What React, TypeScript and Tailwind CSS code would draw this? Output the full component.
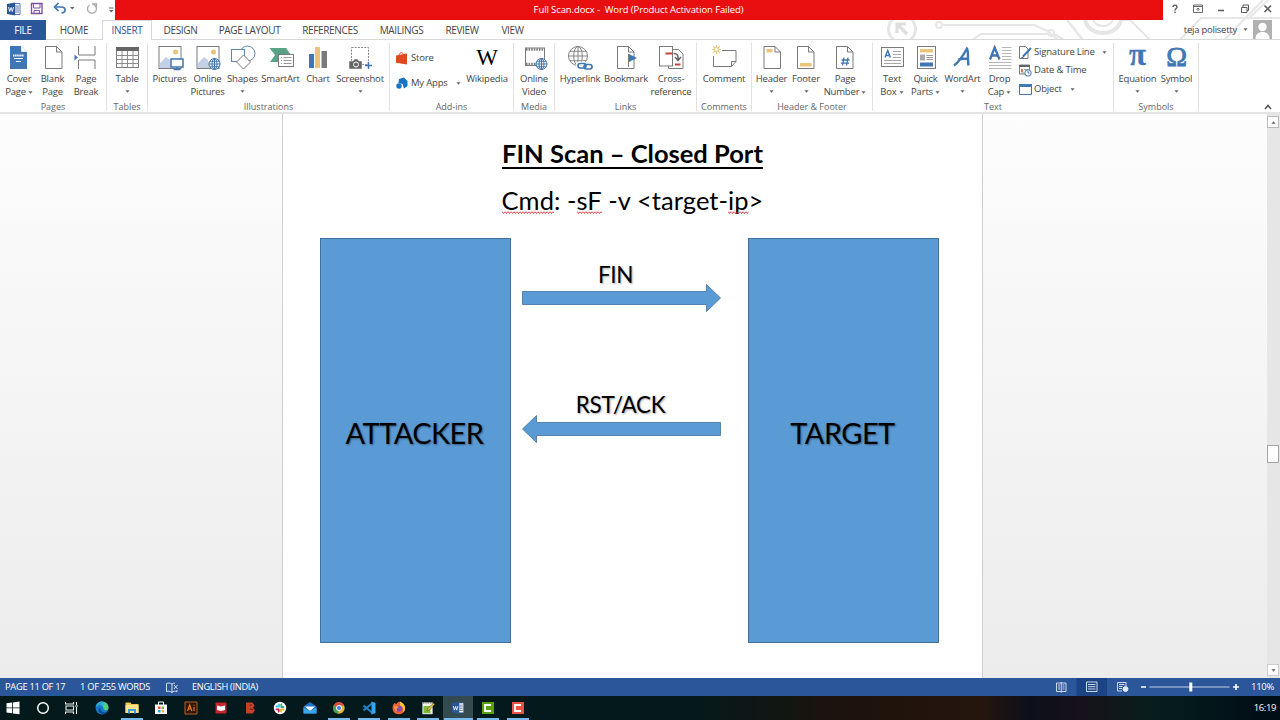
import type { ReactNode } from "react";
import clsx from "clsx";

const GRAY = "#7a7a7a";
const BLUE = "#3f76b5";
const SAND = "#eac47c";

const Caret = ({ className }: { className?: string }) => (
  <svg viewBox="0 0 6 3" className={clsx("h-[3px] w-[5px] shrink-0", className)}>
    <path d="M0.5 0h5L3 3z" fill="#666" />
  </svg>
);

const Globe = ({ cx, cy, r, color = BLUE }: { cx: number; cy: number; r: number; color?: string }) => (
  <g stroke={color} fill="#fff" strokeWidth="1">
    <circle cx={cx} cy={cy} r={r} />
    <ellipse cx={cx} cy={cy} rx={r * 0.45} ry={r} fill="none" />
    <path d={`M${cx - r} ${cy}h${r * 2}M${cx} ${cy - r}v${r * 2}M${cx - r * 0.85} ${cy - r / 2}h${r * 1.7}M${cx - r * 0.85} ${cy + r / 2}h${r * 1.7}`} fill="none" />
  </g>
);

const Doc = ({ x, children }: { x: number; children?: ReactNode }) => (
  <g>
    <path d={`M${x} 1.5h11l5.5 5.5v16.5h-16.5z`} fill="#fff" stroke={GRAY} />
    <path d={`M${x + 11} 1.5v5.5h5.5`} fill="none" stroke={GRAY} />
    {children}
  </g>
);

const Landscape = ({ x }: { x: number }) => (
  <g>
    <rect x={x} y="1.5" width="22" height="22" fill="#fff" stroke={GRAY} />
    <path d={`M${x + 1} 23v-5l6-6 4 3 2 8z`} fill="#c3d0e8" />
    <circle cx={x + 16.5} cy="7" r="2.5" fill={SAND} />
  </g>
);

const icons: Record<string, ReactNode> = {
  cover: (
    <>
      <path d="M5 1h11.500l5.500 5.500V24H5z" fill={BLUE} />
      <path d="M16.500 1v5.500H22" fill="#fff" stroke="#fff" strokeWidth=".7" />
      <path d="M8 10.500h11" stroke="#fff" strokeWidth="2" strokeDasharray="1.500 .6" />
      <path d="M9 13.500h9M11 16.500h5" stroke="#fff" />
    </>
  ),
  blank: <Doc x={6.5} />,
  pageBreak: (
    <>
      <path d="M6.500 1v9h16.500V1M6.500 24v-9h16.500v9" fill="none" stroke={GRAY} />
      <path d="M2.500 9.500l3.500 3-3.500 3z" fill={BLUE} />
    </>
  ),
  table: (
    <>
      <rect x="3.500" y="2.500" width="22" height="20" fill="#fff" stroke={GRAY} />
      <rect x="3" y="2" width="23" height="4" fill="#666" />
      <path d="M3 10.500h23M3 14.500h23M3 18.500h23M9 6v17M14.500 6v17M20 6v17" stroke="#8b8b8b" />
    </>
  ),
  pictures: (
    <>
      <Landscape x={3} />
      <rect x="15" y="14" width="12" height="8" fill="#fff" stroke={BLUE} strokeWidth="1.500" />
      <path d="M21 22v2.500M17.500 24.500h7" stroke={BLUE} strokeWidth="1.300" />
    </>
  ),
  onlinePictures: (
    <>
      <Landscape x={3} />
      <Globe cx={20.5} cy={19} r={5.5} />
    </>
  ),
  shapes: (
    <g stroke="#5e84b5" fill="#fff">
      <circle cx="18.500" cy="8.500" r="7.500" />
      <rect x="2.500" y="4.500" width="13" height="12" />
      <path d="M14.500 10l7 7-7 7-7-7z" stroke={GRAY} />
    </g>
  ),
  smartArt: (
    <>
      <path d="M2.500 3h16.500l5 7-5 7H3l5-7z" fill="#5aa285" />
      <rect x="11.500" y="9.500" width="15" height="12" fill="#fff" stroke={GRAY} />
      <path d="M14 12.500h1M16.500 12.500h8M14 15.500h1M16.500 15.500h8M14 18.500h1M16.500 18.500h8" stroke="#999" />
    </>
  ),
  chart: (
    <>
      <path d="M5 9h5v14H5z" fill={BLUE} />
      <path d="M11 2h5v21h-5z" fill={SAND} />
      <path d="M17.500 6h5.500v17h-5.500z" fill={GRAY} />
    </>
  ),
  screenshot: (
    <>
      <rect x="5.500" y="2.500" width="17" height="17" fill="none" stroke="#888" strokeDasharray="2 1.200" />
      <path d="M3 16h4l1.500-2h3l1.500 2h3v8H3z" fill="#666" stroke="#fff" strokeWidth=".5" />
      <circle cx="10" cy="19.500" r="2.500" fill="none" stroke="#fff" />
      <path d="M22.500 17v7M19 20.500h7" stroke={BLUE} strokeWidth="1.500" />
    </>
  ),
  video: (
    <>
      <rect x="5.500" y="3" width="19" height="17.500" fill="#fff" stroke={GRAY} />
      <path d="M6 4.500h19M6 19h19" stroke="#777" strokeWidth="2.400" strokeDasharray="1.500 1.100" />
      <Globe cx={21.5} cy={19} r={5.5} />
    </>
  ),
  hyperlink: (
    <>
      <Globe cx={12} cy={11} r={9.5} color="#848484" />
      <g fill="none" stroke="#fff" strokeWidth="4">
        <rect x="12" y="18.500" width="8" height="4.500" rx="2.200" />
        <rect x="18" y="19.500" width="8" height="4.500" rx="2.200" />
      </g>
      <g fill="none" stroke={BLUE} strokeWidth="1.700">
        <rect x="12" y="18.500" width="8" height="4.500" rx="2.200" />
        <rect x="18" y="19.500" width="8" height="4.500" rx="2.200" />
      </g>
    </>
  ),
  bookmark: (
    <Doc x={5.5}>
      <path d="M16.500 9v13" stroke={GRAY} />
      <path d="M17 9l8 4-8 4z" fill={BLUE} />
    </Doc>
  ),
  crossRef: (
    <>
      <path d="M14.500 4.500h7l4.500 4.500v14.500H11.500v-3" fill="#fff" stroke={GRAY} />
      <rect x="2.500" y="1.500" width="13" height="19.500" fill="#fff" stroke={GRAY} />
      <path d="M8.500 8.500h7M18 19.500h5.500" stroke="#c9463d" strokeWidth="2" />
      <path d="M16.500 8.500c4 0 5 2 4.500 6M18 12l3 3.500 3-3.500" fill="none" stroke="#666" strokeWidth="1.500" />
    </>
  ),
  comment: (
    <>
      <path d="M12 5.500h14v11l-4.500 5H3.500V11M21.500 21.500v-5H26" fill="none" stroke={GRAY} />
      <path d="M6.500 0v9M2 4.500h9M3.300 1.300l6.400 6.400M9.700 1.300L3.300 7.700" stroke={SAND} strokeWidth="1.200" />
      <circle cx="6.500" cy="4.500" r="2" fill="#fff" stroke={SAND} />
    </>
  ),
  header: (
    <Doc x={6}>
      <path d="M8.500 4h6v3.500h-6z" fill={SAND} />
    </Doc>
  ),
  footer: (
    <Doc x={5.5}>
      <path d="M8 18h11.500v3.500H8z" fill={SAND} />
    </Doc>
  ),
  pageNumber: (
    <Doc x={5.5}>
      <path d="M13 12.500l-1.500 8M17 12.500l-1.500 8M10.500 15h8M10 18.200h8" stroke={BLUE} strokeWidth="1.300" />
    </Doc>
  ),
  textBox: (
    <>
      <rect x="3.500" y="2.500" width="22" height="19" fill="#fff" stroke={GRAY} />
      <path d="M7 12.500l2.700-7 2.700 7M8 10.500h3.500" fill="none" stroke={BLUE} strokeWidth="1.400" />
      <path d="M15 6.500h8M15 9.500h8M15 12.500h8M6 15.500h17M6 18.500h17" stroke="#a8a8a8" />
    </>
  ),
  quickParts: (
    <>
      <rect x="5.500" y="1.500" width="18" height="22" fill="#fff" stroke={GRAY} />
      <path d="M8 4h13v3.500H8z" fill={SAND} />
      <path d="M8 9.500h5v6H8z" fill="#aaa" />
      <path d="M14.500 10.500H21M14.500 12.500H21M14.500 14.500H21" stroke="#999" />
      <path d="M8 17.500h13v4H8z" fill={BLUE} />
    </>
  ),
  wordArt: (
    <path d="M5 20.500C10 17 15 9 18 3.500c1.500 1 .5 11 1.500 17M9.500 14.500c3-1 6-1 10-.5" fill="none" stroke={BLUE} strokeWidth="2.400" />
  ),
  dropCap: (
    <>
      <path d="M4 14.500L8.700 2.500l4.800 12M5.500 10.500h6.500" fill="none" stroke={BLUE} strokeWidth="2.300" />
      <path d="M16 2.500h9.500M16 5.500h9.500M16 8.500h9.500M16 11.500h9.500M16 14.500h9.500M3 17.500h22.500M3 20.500h22.500M3 23.500h22.500" stroke="#a3a3a3" strokeWidth=".8" />
    </>
  ),
};

interface Tool {
  icon?: string;
  glyph?: string;
  glyphClass?: string;
  lines: string[];
  caret?: boolean;
  w: string;
}

const ToolButton = ({ icon, glyph, glyphClass, lines, caret, w }: Tool) => (
  <button className={clsx("flex h-full shrink-0 flex-col items-center pt-[5px]", w)}>
    <span className="flex h-[28px] w-7 shrink-0 items-start justify-center">
      {glyph ? (
        <span className={glyphClass}>{glyph}</span>
      ) : (
        <svg viewBox="0 0 28 26" className="h-[26px] w-7 shrink-0">{icons[icon!]}</svg>
      )}
    </span>
    {lines.map((line, i) => (
      <span key={line} className="flex h-[13px] items-center gap-[2px] whitespace-nowrap">
        {line}
        {caret && i === 1 && <Caret />}
      </span>
    ))}
    {caret && lines.length === 1 && <Caret className="mt-[4px]" />}
  </button>
);

const Group = ({ name, w, pad, children }: { name: string; w: string; pad?: string; children: ReactNode }) => (
  <section className={clsx("flex h-full shrink-0", w)}>
    <div className="flex min-w-0 flex-1 flex-col">
      <div className={clsx("flex h-[61px]", pad)}>{children}</div>
      <div className="flex h-[13px] items-center justify-center pt-[3px] text-[9px] tracking-normal text-[#666]">{name}</div>
    </div>
    <div className="mt-[3px] h-[68px] w-px bg-[#e1e1e1]" />
  </section>
);

const SmallTool = ({ icon, label, caret }: { icon: ReactNode; label: string; caret?: string }) => (
  <button className="flex h-[18px] items-center whitespace-nowrap">
    <svg viewBox="0 0 13 13" className="mr-[2px] h-[13px] w-[13px]">{icon}</svg>
    {label}
    {caret && <Caret className={caret} />}
  </button>
);

const tabs = [
  { name: "HOME", w: "w-[56px]" },
  { name: "INSERT", w: "w-[50px]" },
  { name: "DESIGN", w: "w-[57px]" },
  { name: "PAGE LAYOUT", w: "w-[81px]" },
  { name: "REFERENCES", w: "w-[80px]" },
  { name: "MAILINGS", w: "w-[63px]" },
  { name: "REVIEW", w: "w-[58px]" },
  { name: "VIEW", w: "w-[43px]" },
];

const WordMark = () => (
  <>
    <path d="M6.500 1H13v11H6.500z" fill="#fff" stroke="#2b579a" strokeWidth=".8" />
    <path d="M8 3.500h4M8 5.500h4M8 7.500h4M8 9.500h4" stroke="#2b579a" strokeWidth=".8" />
    <path d="M0 1.500L8 0v13L0 11.500z" fill="#2b579a" />
    <path d="M1.500 4.500l1.200 4.500L4 5l1.300 4 1.200-4.500" fill="none" stroke="#fff" strokeWidth=".9" />
  </>
);

const TitleBar = () => (
  <header className="relative flex h-5 text-[9.500px]">
    <div className="flex w-[115px] items-center">
      <svg viewBox="0 0 115 20" className="h-5 w-[115px]">
        <g transform="translate(7 2.500)"><WordMark /></g>
        <path d="M31.500 3.500h10.500v10H31.500z" fill="#fff" stroke="#7d51a5" strokeWidth="1.400" />
        <path d="M33.500 3.500v4.500h6.500V3.500M34 13.500v-3h5.500v3" fill="none" stroke="#7d51a5" />
        <path d="M55.500 7h6c5 0 4.500 6 0 6" fill="none" stroke={BLUE} strokeWidth="1.700" />
        <path d="M58.500 3l-4 4 4 4" fill="none" stroke={BLUE} strokeWidth="1.700" />
        <path d="M70 7h4.500l-2.250 2.500z" fill="#666" />
        <path d="M93.500 4.500a4.500 4.500 0 1 1-4 .5M92 4h4.500v4" fill="none" stroke="#aaa" strokeWidth="1.300" />
        <path d="M109 8h4.500" stroke="#666" />
        <path d="M109 10h4.500l-2.250 2.500z" fill="#666" />
      </svg>
    </div>
    <div className="flex w-[1048px] items-center justify-center whitespace-pre bg-[#e90f10] text-[9.500px] text-white">
      <span className="-ml-px pt-px tracking-[-0.100px]">Full Scan.docx -  Word (Product Activation Failed)</span>
    </div>
    <svg viewBox="0 0 117 20" className="h-5 w-[117px]" fill="none" stroke="#5a5a5a">
      <path d="M10 7c0-2.500 4-2.500 4 0 0 1.500-2 1.500-2 3.500M12 11.500v1.500" strokeWidth="1.400" />
      <path d="M30.500 5h9v7.500h-9zM30.500 6.500h9M35 11V8M33.500 9.500L35 8l1.500 1.500" strokeWidth=".9" />
      <path d="M55 10.500h6" strokeWidth="1.500" />
      <path d="M78.500 7.500h5.500v5h-5.500zM80 7V5h5.500v5.500H84" strokeWidth="1" />
      <path d="M101.500 5.500l6.500 6.500M108 5.500l-6.500 6.500" strokeWidth="1.600" />
    </svg>
  </header>
);

const Circuits = () => (
  <svg viewBox="0 0 400 40" className="pointer-events-none absolute top-0 left-[880px] h-10 w-[400px]" fill="none" stroke="#e6e6e6">
    <circle cx="22" cy="29" r="13.500" strokeWidth="3" />
    <path d="M27 34l-9-9M17 33v-9h9" stroke="#dedede" strokeWidth="3.200" />
    <circle cx="59" cy="25" r="3" strokeWidth="1.800" />
    <path d="M62 25h92l14 6 10 9" strokeWidth="2" />
    <path d="M92 40l9-6h66" strokeWidth="2" />
    <circle cx="171" cy="33" r="3" strokeWidth="1.800" />
    <path d="M174 34l10 6M187 20l16 20" strokeWidth="2.500" />
    <path d="M205 18a18 15 0 0 0 36 0" strokeWidth="4" />
    <path d="M213 18a10 8 0 0 0 20 0" strokeWidth="2" />
    <path d="M242 20h8l20 20M300 40l21-22h79M345 39l38-39M368 19L388 0" strokeWidth="2" />
  </svg>
);

const TabRow = () => (
  <nav className="relative flex h-[20px] text-[10px] tracking-[-0.035em] text-[#444]">
    <div className="flex w-[46px] items-center justify-center bg-[#2b579a] text-white">FILE</div>
    {tabs.map((tab) => (
      <div
        key={tab.name}
        className={clsx(
          "flex items-center justify-center whitespace-nowrap",
          tab.w,
          tab.name === "INSERT" ? "border-x border-t border-[#d8d8d8] bg-white text-[#2b579a]" : "border-b border-[#d8d8d8] pt-px"
        )}
      >
        {tab.name}
      </div>
    ))}
    <div className="flex flex-1 items-center justify-end border-b border-[#d8d8d8]">
      <span className="pt-px text-[9.500px] tracking-[-0.025em]">teja polisetty</span>
      <Caret className="ml-[6px]" />
      <svg viewBox="0 0 19 19" className="ml-[5px] mr-[8px] h-[19px] w-[19px]">
        <path d="M0 0h19v19H0z" fill="#b1b1b1" />
        <circle cx="9.500" cy="7" r="4.200" fill="#fff" />
        <path d="M2.500 19c0-5 3-7 7-7s7 2 7 7z" fill="#fff" />
      </svg>
    </div>
  </nav>
);

const Ribbon = () => (
  <div className="relative flex h-[74px] border-b-2 border-[#e4e4e4] bg-white text-[9.500px] tracking-[-0.020em] text-[#444]">
    <Group name="Pages" w="w-[107px]" pad="pl-[2px]">
      <ToolButton icon="cover" lines={["Cover", "Page"]} caret w="w-[34px]" />
      <ToolButton icon="blank" lines={["Blank", "Page"]} w="w-[33px]" />
      <ToolButton icon="pageBreak" lines={["Page", "Break"]} w="w-[34px]" />
    </Group>
    <Group name="Tables" w="w-[41px]">
      <ToolButton icon="table" lines={["Table"]} caret w="w-[40px]" />
    </Group>
    <Group name="Illustrations" w="w-[242px]" pad="pl-[2px]">
      <ToolButton icon="pictures" lines={["Pictures"]} w="w-[39px]" />
      <ToolButton icon="onlinePictures" lines={["Online", "Pictures"]} w="w-[37px]" />
      <ToolButton icon="shapes" lines={["Shapes"]} caret w="w-[33px]" />
      <ToolButton icon="smartArt" lines={["SmartArt"]} w="w-[43px]" />
      <ToolButton icon="chart" lines={["Chart"]} w="w-[32px]" />
      <ToolButton icon="screenshot" lines={["Screenshot"]} caret w="w-[52px]" />
    </Group>
    <Group name="Add-ins" w="w-[124px]">
      <div className="flex w-[73px] flex-col gap-[7px] pt-[9px] pl-[6px]">
        <SmallTool
          label="Store"
          icon={<><path d="M0 3.500l11-2v11L0 10.800z" fill="#e0491f" /><path d="M3 4c0-4 4-4.500 4.500-1" fill="none" stroke="#e0491f" /></>}
        />
        <SmallTool
          label="My Apps"
          caret="ml-[8px]"
          icon={<><path d="M3 2l5-1.500L11.500 4v5L8 11.500 6.500 7 2.500 6z" fill="#1773c4" /><circle cx="3" cy="9" r="2.700" fill="#1773c4" /></>}
        />
      </div>
      <ToolButton glyph="W" glyphClass="font-['Liberation_Serif'] text-[23px] leading-[25px] text-black" lines={["Wikipedia"]} w="w-[48px]" />
    </Group>
    <Group name="Media" w="w-[41px]">
      <ToolButton icon="video" lines={["Online", "Video"]} w="w-[40px]" />
    </Group>
    <Group name="Links" w="w-[142px]" pad="pl-px">
      <ToolButton icon="hyperlink" lines={["Hyperlink"]} w="w-[48px]" />
      <ToolButton icon="bookmark" lines={["Bookmark"]} w="w-[44px]" />
      <ToolButton icon="crossRef" lines={["Cross-", "reference"]} w="w-[46px]" />
    </Group>
    <Group name="Comments" w="w-[55px]">
      <ToolButton icon="comment" lines={["Comment"]} w="w-[54px]" />
    </Group>
    <Group name="Header & Footer" w="w-[121px]" pad="pl-px">
      <ToolButton icon="header" lines={["Header"]} caret w="w-[37px]" />
      <ToolButton icon="footer" lines={["Footer"]} caret w="w-[32px]" />
      <ToolButton icon="pageNumber" lines={["Page", "Number"]} caret w="w-[46px]" />
    </Group>
    <Group name="Text" w="w-[241px]" pad="pl-[3px]">
      <ToolButton icon="textBox" lines={["Text", "Box"]} caret w="w-[32px]" />
      <ToolButton icon="quickParts" lines={["Quick", "Parts"]} caret w="w-[35px]" />
      <ToolButton icon="wordArt" lines={["WordArt"]} caret w="w-[39px]" />
      <ToolButton icon="dropCap" lines={["Drop", "Cap"]} caret w="w-[35px]" />
      <div className="flex flex-col gap-[0.500px] pt-[3px] pl-[2px]">
        <SmallTool
          label="Signature Line"
          caret="ml-[7px]"
          icon={<><path d="M.5.500h6L9 3v9.500H.5z" fill="#fff" stroke={GRAY} /><path d="M4 10.500L12 2M2.500 12l2-.5" stroke={BLUE} strokeWidth="2" /></>}
        />
        <SmallTool
          label="Date & Time"
          icon={<><path d="M.5 1h10v9H.5z" fill="#fff" stroke={GRAY} /><path d="M0 2h11" stroke="#666" strokeWidth="2" /><path d="M2 5h2v3H2z" fill="#d67b55" /><path d="M5 5.500h4M2 9h3" stroke="#999" /><circle cx="9" cy="9" r="3.200" fill="#fff" stroke={BLUE} /><path d="M9 7v2h1.500" fill="none" stroke={BLUE} /></>}
        />
        <SmallTool
          label="Object"
          caret="ml-[8px]"
          icon={<><path d="M.5 1.500h12v10H.5z" fill="#fff" stroke={BLUE} /><path d="M0 2.500h13" stroke={BLUE} strokeWidth="3" /></>}
        />
      </div>
    </Group>
    <Group name="Symbols" w="w-[85px]" pad="pl-[3px]">
      <ToolButton glyph="π" glyphClass="font-['Liberation_Serif'] text-[31px] font-bold leading-[20px] text-[#3f76b5] [-webkit-text-stroke:0.300px_#3f76b5]" lines={["Equation"]} caret w="w-[41px]" />
      <ToolButton glyph="Ω" glyphClass="font-['Liberation_Serif'] text-[28px] leading-[23px] text-[#3f76b5] [-webkit-text-stroke:0.800px_#3f76b5]" lines={["Symbol"]} caret w="w-[37px]" />
    </Group>
    <div className="flex flex-1 items-end justify-end pr-[8px] pb-[2px]">
      <svg viewBox="0 0 8 6" className="h-[6px] w-[8px]"><path d="M1 5l3-3.500L7 5" fill="none" stroke="#555" strokeWidth="1.500" /></svg>
    </div>
  </div>
);

const Typo = ({ children }: { children: string }) => (
  <span className="relative inline-block">
    {children}
    <svg className="absolute bottom-[4px] left-0 h-[3px] w-full">
      <defs>
        <pattern id="squiggle" width="3" height="3" patternUnits="userSpaceOnUse">
          <path d="M0 .5L1.500 2.500 3 .5" fill="none" stroke="#dd2530" strokeWidth=".9" />
        </pattern>
      </defs>
      <rect width="100%" height="3" fill="url(#squiggle)" />
    </svg>
  </span>
);

const Arrow = ({ flip }: { flip?: boolean }) => (
  <svg viewBox="0 0 199 28" className={clsx("block h-7 w-[199px]", flip && "-scale-x-100")}>
    <path d="M.5 7.500h184v-7l14 13.500-14 13.500v-7H.5z" fill="#5b9bd5" stroke="#41719c" strokeWidth=".8" />
  </svg>
);

const Box = ({ children }: { children: string }) => (
  <div className="flex h-[405.500px] w-[191px] items-center justify-center border border-[#41719c] bg-[#5b9bd5] pr-[2px] pb-[15px] text-[29px] tracking-[-0.020em] [text-shadow:1px_1px_2px_rgba(0,0,0,0.4)]">
    {children}
  </div>
);

const Page = () => (
  <main className="flex w-[701px] shrink-0 flex-col border-x border-[#cfcfcf] bg-white font-['Lato'] text-black">
    <div className="flex h-[123.500px] flex-col items-center whitespace-nowrap">
      <h1 className="mt-[21px] h-[36px] text-[25.500px] leading-[36px] font-bold">
        <span className="underline decoration-[1.500px] underline-offset-[3.500px] [text-decoration-skip-ink:none]">FIN Scan – Closed Port</span>
      </h1>
      <p className="mt-[11px] text-[25.500px] leading-[36px] tracking-[0.002em]">
        <Typo>Cmd</Typo>: -<Typo>sF</Typo> -v &lt;target-<Typo>ip</Typo>&gt;
      </p>
    </div>
    <div className="flex pl-[37px]">
      <Box>ATTACKER</Box>
      <div className="mr-[27px] ml-[11px] flex w-[199px] flex-col items-center text-[22.500px] leading-[28px] tracking-[-0.015em] [text-shadow:1px_1px_2px_rgba(0,0,0,0.35)]">
        <span className="mt-[23px] -ml-[12px]">FIN</span>
        <div className="-mt-[5px]"><Arrow /></div>
        <span className="mt-[79px] -ml-[2px]">RST/ACK</span>
        <div className="-mt-[4px]"><Arrow flip /></div>
      </div>
      <Box>TARGET</Box>
    </div>
  </main>
);

const ScrollBar = () => (
  <div className="flex w-[13px] flex-col items-start justify-between bg-[#e6e6e6] py-[2px]">
    <div className="flex h-[12px] w-[12px] items-center justify-center border border-[#bbb] bg-white"><Caret className="rotate-180" /></div>
    <div className="mt-[116px] h-[18px] w-[12px] border border-[#a5a5a5] bg-white" />
    <div className="flex h-[12px] w-[12px] items-center justify-center border border-[#ccc] bg-white"><Caret /></div>
  </div>
);

const StatusBar = () => (
  <footer className="flex h-[18px] items-center bg-[#2b579a] text-[9.300px] tracking-[-0.030em] text-white">
    <span className="ml-[5px] w-[75px]">PAGE 11 OF 17</span>
    <span className="w-[86px]">1 OF 255 WORDS</span>
    <svg viewBox="0 0 12 11" className="h-[11px] w-[12px]" fill="none" stroke="#e8eef7" strokeWidth=".9">
      <path d="M6 2v8.500M6 2C4 .8 2 .8.5 1.500v8C2 9 4 9 6 10.500 7.500 9 9 9 11 9.500V8M6 2c1-.8 2-.8 3-.8M8 3l3.500 4M11.500 3L8 7" />
    </svg>
    <span className="ml-[14px] flex-1 text-[9.200px]">ENGLISH (INDIA)</span>
    <svg viewBox="0 0 100 18" className="h-[18px] w-[100px]" fill="none" stroke="#dfe8f5" strokeWidth=".9">
      <path d="M36.500 0h30.500v18H36.500z" fill="#1c4384" stroke="none" />
      <path d="M16.500 5h9.500v8.500h-9.500zM21.250 4v10.500M18 7h2M18 9h2M18 11h2M22.500 7h2M22.500 9h2M22.500 11h2" />
      <path d="M46.500 4h10.500v9.500H46.500zM48 6.500h7.500M48 8.700h7.500M48 11h7.500" />
      <path d="M82 13H77.500V4.500H86V8M79 6.500h5.500M79 8.500h3.500M79 10.500h3" />
      <circle cx="85.500" cy="11" r="2.500" fill="#dfe8f5" />
    </svg>
    <svg viewBox="0 0 100 18" className="h-[18px] w-[100px]" stroke="#fff">
      <path d="M1 9h5M93 9h6M96 6v6" strokeWidth="1.600" />
      <path d="M9.500 9h80" strokeWidth=".9" opacity=".8" />
      <path d="M50.800 4.500v9" strokeWidth="3" />
    </svg>
    <span className="mr-[6px] ml-[11px] w-[23px] whitespace-nowrap text-[9.500px]">110%</span>
  </footer>
);

const Camtasia = ({ color }: { color: string }) => (
  <>
    <path d="M2 2h12v12H2z" fill={color} />
    <path d="M11 5H5v6h6" fill="none" stroke="#fff" strokeWidth="1.800" />
  </>
);

const apps: { name: string; open?: boolean; active?: boolean; icon: ReactNode }[] = [
  { name: "Start", icon: <path d="M1.500 3.200L7 2.500v5H1.500zM7.800 2.400L14.500 1.500v6H7.800zM1.500 8.300H7v5l-5.500-.7zM7.800 8.300h6.700v6l-6.700-.9z" fill="#fff" /> },
  { name: "Search", icon: <circle cx="8" cy="8" r="5.300" fill="none" stroke="#fff" strokeWidth="1.500" /> },
  { name: "Task view", icon: <path d="M1.500 2v2h8V2M1.500 14v-2h8v2M2 6h7.500v4H2zM12.500 2v3M12.500 7v7M11 6h3" fill="none" stroke="#eee" strokeWidth="1.100" /> },
  { name: "Edge", icon: (
    <>
      <circle cx="8" cy="8" r="6.500" fill="#1678cf" />
      <path d="M1.800 7C3 0 14.500 0 14.500 8c0 3-5 3-5 .5C9 4.500 4 4 1.800 7z" fill="#4fcf86" />
      <path d="M1.800 7C3 1 8 .5 10.500 2.300 8 3 10 5 9.500 8.500 9 4.500 4 4 1.800 7z" fill="#29a9dd" />
      <path d="M6.500 7.500c-1 5 4 5.500 7 4-3 5-10 2-9-2 .3-1 1-2 2-2z" fill="#0d4c98" />
    </>
  ) },
  { name: "Explorer", open: true, icon: (
    <>
      <path d="M1.500 2.500h5l1 1.500h7v9h-13z" fill="#f1c84d" />
      <path d="M1.500 5h13v8h-13z" fill="#fbe28b" />
      <path d="M4 13.500V9h8v4.500h-2V11H6v2.500z" fill="#3c9cdd" />
    </>
  ) },
  { name: "Store", icon: (
    <>
      <path d="M5.500 5V2h5v3" fill="none" stroke="#fff" />
      <path d="M2 4.500h12V14H2z" fill="#fff" />
      <path d="M5 6.500h2.500V9H5z" fill="#e65236" /><path d="M8.500 6.500H11V9H8.500z" fill="#78b73b" />
      <path d="M5 10h2.500v2.500H5z" fill="#2e9fe0" /><path d="M8.500 10H11v2.500H8.500z" fill="#f3b632" />
    </>
  ) },
  { name: "Illustrator", icon: (
    <>
      <path d="M2 2h12v12H2z" fill="#301600" stroke="#b96120" />
      <path d="M4.500 11l2.200-6 2.200 6M5.200 9h3M11 7v4M11 4.800v1" fill="none" stroke="#df7b2a" strokeWidth="1.200" />
    </>
  ) },
  { name: "Reader", icon: (
    <>
      <rect x="2.500" y="2.500" width="11" height="11" rx="1" fill="#c9242c" />
      <path d="M4 5.500L8 6.500l4-1v4.500L8 11 4 10z" fill="#fff" />
    </>
  ) },
  { name: "Notes", icon: (
    <>
      <path d="M4 2.500h6.500l2 3-1.500 2.500 2 2-2 3.500H4z" fill="#c6402c" />
      <path d="M7.500 5h2M8 9l3 .5" stroke="#54201b" />
    </>
  ) },
  { name: "Slack", icon: (
    <>
      <circle cx="8" cy="8" r="6.200" fill="#fff" />
      <g strokeWidth="1.800" strokeLinecap="round">
        <path d="M7 4.500v2M4.500 6.500H7" stroke="#36c5f0" /><path d="M9.300 4.500v2.500M9.500 7h2" stroke="#2eb67d" />
        <path d="M9 9.500v2M9 9.500h2.500" stroke="#ecb22e" /><path d="M6.700 9.500v2M4.500 9.300h2" stroke="#e01e5a" />
      </g>
    </>
  ) },
  { name: "Mail", icon: (
    <>
      <path d="M1.500 6.500L8 2l6.500 4.500v7h-13z" fill="#1c72c4" />
      <path d="M3 6.500h10L8 11z" fill="#fff" />
      <path d="M1.500 7.500L8 11l6.500-3.500v6h-13z" fill="#38a6e8" />
    </>
  ) },
  { name: "Chrome", open: true, icon: (
    <>
      <circle cx="8" cy="8" r="5.700" fill="#e5b52f" />
      <path d="M3 5c2-4 8-4 10.200.5H8L5.500 9.500z" fill="#d94b3f" />
      <path d="M3 5l3 5.200 2 .5-1.500 2.800C2 13 1.300 8 3 5z" fill="#45a05b" />
      <circle cx="8" cy="8" r="2.600" fill="#4a82d8" stroke="#fff" strokeWidth=".9" />
    </>
  ) },
  { name: "Code", open: true, icon: (
    <>
      <path d="M2.500 5.500L11.500 13M2.500 10.500L11.500 3" stroke="#1c83cc" strokeWidth="2" />
      <path d="M10.500 1.500L14.500 3v10l-4 1.500z" fill="#36a6ee" />
    </>
  ) },
  { name: "Firefox", open: true, icon: (
    <>
      <path d="M2 5l1.500-2L5 4l3-2.500 4 2c3.500 3 2.500 10.800-4 10.800C2 14.300.8 9 2 5z" fill="#ee6031" />
      <path d="M9 1.500c5 2 7 8 3 11 1-3 0-6-3-7z" fill="#ffcb3a" />
      <circle cx="8" cy="8.700" r="3" fill="#8447bc" />
      <path d="M3 6.500c2-1 4-.5 5 1-2 0-3 1.500-2 3.500-2-.5-3-2-3-4.500z" fill="#ff9a37" />
    </>
  ) },
  { name: "Editor", open: true, icon: (
    <>
      <path d="M2.500 2.500h10v11.500h-10z" fill="#f4f4e9" stroke="#ababab" strokeWidth=".6" />
      <path d="M3.500 6h7v7h-7z" fill="#7dbd35" />
      <path d="M3 3h9" stroke="#666" strokeDasharray="1 .7" />
      <path d="M7 11l1-2.500L13.500 3l1.200 1.300L9.500 10z" fill="#e9bc42" stroke="#5b4c25" strokeWidth=".5" />
    </>
  ) },
  { name: "Word", open: true, active: true, icon: <g transform="translate(2 2) scale(.9)"><WordMark /></g> },
  { name: "Camtasia", open: true, icon: <Camtasia color="#53a30d" /> },
  { name: "Recorder", open: true, icon: <Camtasia color="#e95245" /> },
];

const TaskBar = () => (
  <div className="flex h-[24px] items-stretch bg-[linear-gradient(90deg,#04191b_0,#04191b_640px,#06191a_700px,#1d120c_850px,#25160d_980px,#0c101b_1030px,#17111a_1080px,#081e1c_1150px,#03191c_1190px,#020e16_1260px)]">
    <div className="-ml-[2px] flex">
      {apps.map((app) => (
        <div key={app.name} className={clsx("flex w-[29.700px] flex-col items-center justify-between pt-[4px]", app.active && "bg-[#334b50]")}>
          <svg viewBox="0 0 16 16" className="h-4 w-4">{app.icon}</svg>
          {app.open && <div className={clsx("h-[2px] bg-[#76b9ed]", app.active ? "w-[29px]" : "w-[22px]")} />}
        </div>
      ))}
    </div>
    <span className="mr-[4px] ml-auto self-center text-[9.500px] tracking-[-0.040em] text-white">16:19</span>
  </div>
);

export default function App() {
  return (
    <div className="relative flex h-[720px] w-[1280px] flex-col overflow-hidden bg-white font-['Open_Sans',sans-serif]">
      <Circuits />
      <TitleBar />
      <TabRow />
      <Ribbon />
      <div className="flex h-[564px] overflow-hidden bg-[linear-gradient(#fdfdfd,#ececec)]">
        <div className="w-[282px] shrink-0" />
        <Page />
        <div className="flex-1" />
        <ScrollBar />
      </div>
      <StatusBar />
      <TaskBar />
    </div>
  );
}
